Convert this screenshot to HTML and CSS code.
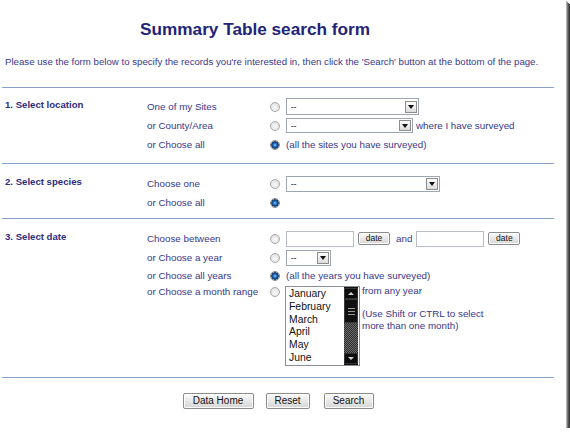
FILE: index.html
```html
<!DOCTYPE html>
<html>
<head>
<meta charset="utf-8">
<link rel="stylesheet" href="styles.css">
</head>
<body>
<div class="frame">
  <h1 class="title">Summary Table search form</h1>
  <p class="intro">Please use the form below to specify the records you're interested in, then click the 'Search' button at the bottom of the page.</p>

  <section class="sec s1">
    <div class="head">1.&nbsp;Select location</div>
    <div class="rows">
      <div class="row">
        <span class="lab">One of my Sites</span>
        <input type="radio" class="radio" name="loc">
        <div class="ctl"><div class="sel w133"><span class="val">--</span><span class="arr"></span></div></div>
      </div>
      <div class="row">
        <span class="lab">or County/Area</span>
        <input type="radio" class="radio" name="loc">
        <div class="ctl"><div class="sel w127"><span class="val">--</span><span class="arr"></span></div><span class="txt after">where I have surveyed</span></div>
      </div>
      <div class="row">
        <span class="lab">or Choose all</span>
        <input type="radio" class="radio" name="loc" checked>
        <div class="ctl"><span class="txt">(all the sites you have surveyed)</span></div>
      </div>
    </div>
  </section>

  <section class="sec s2">
    <div class="head">2.&nbsp;Select species</div>
    <div class="rows">
      <div class="row">
        <span class="lab">Choose one</span>
        <input type="radio" class="radio" name="sp">
        <div class="ctl"><div class="sel w154"><span class="val">--</span><span class="arr"></span></div></div>
      </div>
      <div class="row">
        <span class="lab">or Choose all</span>
        <input type="radio" class="radio" name="sp" checked>
        <div class="ctl"></div>
      </div>
    </div>
  </section>

  <section class="sec s3">
    <div class="head">3.&nbsp;Select date</div>
    <div class="rows">
      <div class="row">
        <span class="lab">Choose between</span>
        <input type="radio" class="radio" name="dt">
        <div class="ctl">
          <span class="tin"></span><button class="btn small">date</button>
          <span class="txt and">and</span>
          <span class="tin"></span><button class="btn small">date</button>
        </div>
      </div>
      <div class="row">
        <span class="lab">or Choose a year</span>
        <input type="radio" class="radio" name="dt">
        <div class="ctl"><div class="sel w45"><span class="val">--</span><span class="arr"></span></div></div>
      </div>
      <div class="row r3">
        <span class="lab">or Choose all years</span>
        <input type="radio" class="radio" name="dt" checked>
        <div class="ctl"><span class="txt">(all the years you have surveyed)</span></div>
      </div>
      <div class="row r4">
        <span class="lab">or Choose a month range</span>
        <input type="radio" class="radio" name="dt">
        <div class="ctl top">
          <div class="list">
            <div class="opts">
              <div>January</div><div>February</div><div>March</div><div>April</div><div>May</div><div>June</div>
            </div>
            <div class="sb">
              <div class="sbtn"><span class="up"></span></div>
              <div class="thumb"><span></span><span></span><span></span></div>
              <div class="track"></div>
              <div class="sbtn"><span class="down"></span></div>
            </div>
          </div>
          <div class="note">from any year<br><br>(Use Shift or CTRL to select<br>more than one month)</div>
        </div>
      </div>
    </div>
  </section>

  <div class="actions">
    <button class="btn big w71">Data Home</button>
    <button class="btn big w44">Reset</button>
    <button class="btn big w50">Search</button>
  </div>
</div>
</body>
</html>
```

FILE: styles.css
```css
* { box-sizing: border-box; }
html, body { margin: 0; padding: 0; background: #fff; }
body { font-family: "Liberation Sans", Arial, sans-serif; color: #37378c; }

.frame {
  width: 566px;
  height: 428px;
  background: #fff;
  box-shadow: 1px 1px 0 #b5b5b5, 2px 2px 0 #7a7a7a, 3px 3px 0 #555, 4px 4px 0 #3c3c3c;
  overflow: hidden;
}

.title {
  width: 510px;
  margin: 19px 0 0;
  text-align: center;
  font-size: 17.2px;
  line-height: 20px;
  font-weight: bold;
  color: #232378;
}

.intro {
  margin: 17px 0 0 5px;
  font-size: 9.66px;
  line-height: 12px;
  white-space: nowrap;
}

.sec {
  margin: 19px 0 0 2px;
  width: 552px;
  border-top: 1px solid #86a2c9;
  display: flex;
  padding-left: 3px;
}
.s1 { padding-top: 9px; padding-bottom: 9px; }
.s2 { margin-top: 0; padding-top: 10px; padding-bottom: 6px; }
.s3 { margin-top: 0; padding-top: 10px; padding-bottom: 11px; border-bottom: 1px solid #86a2c9; }

.head {
  width: 142px;
  flex: none;
  margin-top: 1px;
  font-size: 9.6px;
  line-height: 13px;
  font-weight: bold;
  color: #2c2c80;
}

.rows { display: flex; flex-direction: column; }
.row {
  display: grid;
  grid-template-columns: 118px 20px auto;
  align-items: center;
  height: 19px;
}
.r3 { height: 18px; }
.r4 { height: auto; align-items: start; }
.r4 .lab { margin-top: 1px; }
.r4 .radio { margin-top: 2px; }

.lab { font-size: 9.8px; line-height: 12px; white-space: nowrap; }
.txt { font-size: 9.8px; line-height: 12px; white-space: nowrap; }
.after { margin-left: 3px; }
.and { margin: 0 4px 0 6px; }

.radio {
  appearance: none;
  -webkit-appearance: none;
  margin: 0 0 0 5px;
  width: 10px;
  height: 10px;
  border-radius: 50%;
  border: 1px solid #a8a8a8;
  background: radial-gradient(circle at 50% 60%, #fafafa 0, #e6e6e6 60%, #d2d2d2 100%);
}
.radio:checked {
  border-color: #8a8a8a;
  background: radial-gradient(circle at 50% 50%, #9fd4ff 0, #2a78c8 1.5px, #123f80 3px, #2b4f7a 3.6px, #e4e4e4 4px, #d0d0d0 100%);
}

.ctl { display: flex; align-items: center; padding-left: 1px; }
.ctl.top { align-items: flex-start; padding-left: 0; }

.sel {
  display: flex;
  align-items: center;
  height: 16px;
  border: 1px solid #9ea6b1;
  background: #fff;
  padding: 1px;
}
.w133 { width: 133px; height: 17px; }
.w127 { width: 127px; height: 15px; }
.w154 { width: 154px; }
.w45 { width: 45px; }
.val {
  flex: 1;
  font-size: 8px;
  font-weight: bold;
  color: #444;
  padding-left: 3px;
  line-height: 10px;
}
.arr {
  width: 12px;
  height: 12px;
  border: 1px solid #8d8d8d;
  background: linear-gradient(#fdfdfd, #dcdcdc);
  display: flex;
  align-items: center;
  justify-content: center;
}
.w127 .arr { height: 11px; }
.arr::after {
  content: "";
  border-left: 3px solid transparent;
  border-right: 3px solid transparent;
  border-top: 4px solid #111;
}

.tin {
  width: 68px;
  height: 16px;
  border: 1px solid #b8bcc4;
  background: #fff;
}

.btn {
  font-family: "Liberation Sans", Arial, sans-serif;
  color: #111;
  border: 1px solid #8c8c8c;
  border-radius: 2px;
  background: linear-gradient(#fbfbfb, #e6e6e6 55%, #d6d6d6);
  padding: 0;
  box-shadow: inset 0 0 0 1px #fff;
}
.btn.small {
  width: 32px;
  height: 13px;
  font-size: 8.5px;
  line-height: 11px;
  margin-left: 4px;
}

.list {
  margin-top: 1px;
  width: 75px;
  height: 80px;
  border: 1px solid #8a8f98;
  background: #fff;
  display: flex;
}
.opts {
  flex: 1;
  padding: 1px 0 0 3px;
  font-size: 10.4px;
  line-height: 12.8px;
  color: #111;
}
.sb {
  width: 14px;
  background: #111;
  display: flex;
  flex-direction: column;
  padding: 1px 0;
  margin: 0 1px 0 0;
}
.sbtn {
  height: 11px;
  background: #0c0c0c;
  border: 1px solid #333;
  display: flex;
  align-items: center;
  justify-content: center;
}
.up {
  border-left: 3px solid transparent;
  border-right: 3px solid transparent;
  border-bottom: 3px solid #cfcfcf;
}
.down {
  border-left: 3px solid transparent;
  border-right: 3px solid transparent;
  border-top: 3px solid #cfcfcf;
}
.thumb {
  height: 24px;
  background: #101010;
  border: 1px solid #3a3a3a;
  display: flex;
  flex-direction: column;
  justify-content: center;
  align-items: center;
  gap: 2px;
}
.thumb span { width: 7px; height: 1px; background: #9a9a9a; }
.track {
  flex: 1;
  background-color: #444;
  background-image: repeating-conic-gradient(#6a6a6a 0 25%, #2e2e2e 0 50%);
  background-size: 2px 2px;
}

.note {
  margin-left: 2px;
  font-size: 9.8px;
  line-height: 11.7px;
  white-space: nowrap;
}

.actions {
  display: flex;
  justify-content: center;
  gap: 12px;
  margin-top: 15px;
  width: 556px;
}
.btn.big {
  height: 16px;
  font-size: 10px;
  line-height: 14px;
}
.w71 { width: 71px; }
.w44 { width: 44px; }
.w50 { width: 50px; margin-left: 2px; }
```
